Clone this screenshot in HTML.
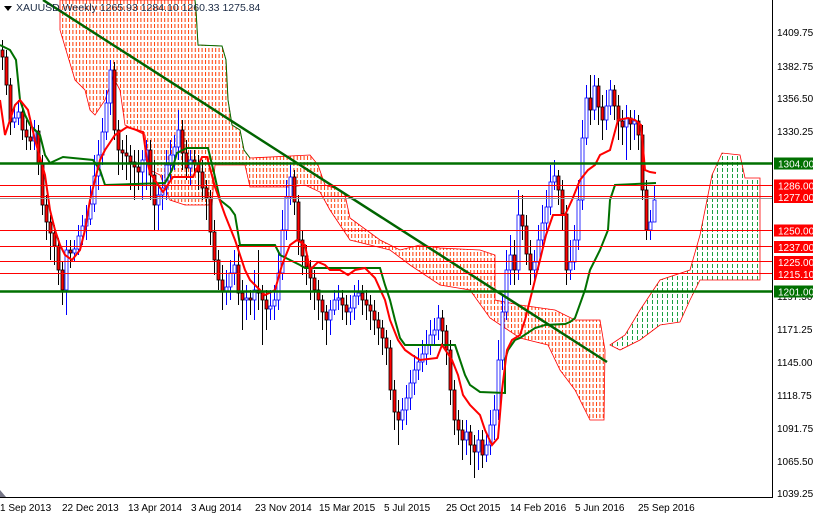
<!DOCTYPE html>
<html><head><meta charset="utf-8"><style>
html,body{margin:0;padding:0;background:#fff;width:814px;height:514px;overflow:hidden}
svg{display:block}
text{font-family:"Liberation Sans",sans-serif;font-size:10px}
</style></head><body>
<svg width="814" height="514" xmlns="http://www.w3.org/2000/svg">
<defs>
<pattern id="po" width="3.4" height="6" patternUnits="userSpaceOnUse"><rect x="1" y="0" width="1" height="4" fill="#ff3a00"/></pattern>
<pattern id="pg" width="5" height="6" patternUnits="userSpaceOnUse"><rect x="2" y="0" width="1" height="4" fill="#1aa040"/></pattern>
<clipPath id="cp"><rect x="0" y="0" width="772" height="497"/></clipPath>
</defs>
<rect width="814" height="514" fill="#fff"/>
<g clip-path="url(#cp)">
<polygon fill="url(#po)" stroke="#f00" stroke-width="0.8" points="60,0 195,0 196,10 198,45 222,46 226,60 228,100 232,125 240,130 244,150 250,158 310,155 318,165 325,185 340,190 345,195 350,218 380,240 400,250 420,245 440,248 480,250 495,255 495,300 520,305 555,310 575,320 600,320 605,350 604,420 590,420 575,390 560,370 548,345 520,338 505,328 490,318 470,290 440,285 410,265 390,250 370,245 350,240 330,210 320,192 305,185 290,187 250,187 245,165 215,165 212,205 185,205 170,200 160,175 150,170 145,135 135,130 125,125 120,90 113,77 105,100 95,115 90,110 85,90 75,80 63,40 60,30"/>
<polyline fill="none" stroke="#007000" stroke-width="1" points="195,0 196,10 198,45 222,46 226,60 228,100 232,125 240,130 244,150 250,158"/>
<polygon fill="url(#pg)" stroke="#f00" stroke-width="0.8" points="610,345 625,335 640,310 660,280 690,270 700,235 712,175 722,153 740,155 745,178 760,178 760,280 730,280 700,280 690,300 680,322 660,325 640,340 620,350"/>
<path fill="none" stroke="#000" stroke-width="1" d="M2.5 40V70M6.5 50V95M10.5 78V135M22.5 105V140M26.5 120V150M30.5 125V150M38.5 125V175M42.5 155V215M46.5 195V240M50.5 215V260M54.5 225V265M58.5 238V285M62.5 262V305M70.5 240V268M114.5 62V140M118.5 120V175M122.5 140V170M126.5 135V180M130.5 145V190M134.5 150V200M138.5 150V190M150.5 140V200M154.5 160V230M182.5 120V170M186.5 140V180M194.5 150V175M198.5 155V190M202.5 160V200M206.5 180V220M210.5 190V245M214.5 220V275M218.5 250V290M222.5 265V310M238.5 245V305M242.5 280V330M250.5 290V315M258.5 250V310M262.5 285V345M266.5 290V330M294.5 170V215M298.5 195V255M302.5 230V275M306.5 245V285M310.5 260V300M314.5 270V310M318.5 280V320M322.5 295V330M326.5 305V345M342.5 290V320M346.5 295V325M362.5 285V315M366.5 290V320M370.5 295V330M374.5 300V335M378.5 312V345M382.5 320V355M386.5 330V365M390.5 340V400M394.5 380V430M398.5 400V445M442.5 310V345M446.5 325V365M450.5 340V405M454.5 380V435M458.5 410V445M462.5 420V460M470.5 425V465M474.5 435V478M482.5 430V468M514.5 240V285M522.5 195V240M526.5 215V265M530.5 240V285M558.5 170V205M562.5 180V230M566.5 205V285M590.5 75V125M598.5 78V125M602.5 95V140M614.5 85V120M618.5 95V140M622.5 110V145M630.5 110V150M638.5 115V150M642.5 125V200M646.5 180V240"/>
<path fill="none" stroke="#0000ff" stroke-width="1" d="M14.5 105V128M18.5 100V125M34.5 120V150M66.5 240V315M74.5 240V262M78.5 225V255M82.5 215V245M86.5 205V240M90.5 185V225M94.5 155V212M98.5 140V190M102.5 118V165M106.5 90V140M110.5 60V115M142.5 150V200M146.5 140V190M158.5 185V230M162.5 175V210M166.5 150V200M170.5 140V180M174.5 135V170M178.5 110V160M190.5 150V185M226.5 270V305M230.5 260V300M234.5 250V285M246.5 285V320M254.5 270V320M270.5 290V320M274.5 285V320M278.5 250V310M282.5 210V280M286.5 180V240M290.5 165V205M330.5 300V335M334.5 290V315M338.5 285V310M350.5 295V325M354.5 285V320M358.5 280V305M402.5 398V430M406.5 385V425M410.5 370V410M414.5 355V395M418.5 348V380M422.5 340V372M426.5 330V365M430.5 320V355M434.5 318V345M438.5 305V340M466.5 420V455M478.5 430V470M486.5 435V462M490.5 410V455M494.5 395V440M498.5 340V420M502.5 295V370M506.5 250V320M510.5 235V285M518.5 190V280M534.5 250V280M538.5 225V270M542.5 205V250M546.5 190V230M550.5 165V215M554.5 160V190M570.5 240V280M574.5 225V270M578.5 180V250M582.5 120V210M586.5 85V145M594.5 75V120M606.5 90V130M610.5 80V115M626.5 105V160M634.5 110V140M650.5 210V240M654.5 185V220"/>
<g fill="#f00" stroke="#000" stroke-width="0.8">
<rect x="1" y="50" width="3" height="7"/><rect x="5" y="57" width="3" height="28"/><rect x="9" y="85" width="3" height="37"/><rect x="21" y="112" width="3" height="18"/><rect x="25" y="130" width="3" height="7"/><rect x="29" y="137" width="3" height="4"/><rect x="37" y="131" width="3" height="32"/><rect x="41" y="163" width="3" height="42"/><rect x="45" y="205" width="3" height="17"/><rect x="49" y="222" width="3" height="11"/><rect x="53" y="233" width="3" height="13"/><rect x="57" y="246" width="3" height="24"/><rect x="61" y="270" width="3" height="20"/><rect x="69" y="250" width="3" height="3"/><rect x="113" y="70" width="3" height="60"/><rect x="117" y="130" width="3" height="20"/><rect x="121" y="150" width="3" height="3"/><rect x="125" y="153" width="3" height="3"/><rect x="129" y="156" width="3" height="6"/><rect x="133" y="162" width="3" height="5"/><rect x="137" y="167" width="3" height="5"/><rect x="149" y="150" width="3" height="25"/><rect x="153" y="175" width="3" height="30"/><rect x="181" y="130" width="3" height="23"/><rect x="185" y="153" width="3" height="15"/><rect x="193" y="160" width="3" height="3"/><rect x="197" y="163" width="3" height="9"/><rect x="201" y="172" width="3" height="16"/><rect x="205" y="188" width="3" height="10"/><rect x="209" y="198" width="3" height="34"/><rect x="213" y="232" width="3" height="28"/><rect x="217" y="260" width="3" height="20"/><rect x="221" y="280" width="3" height="12"/><rect x="237" y="265" width="3" height="28"/><rect x="241" y="293" width="3" height="7"/><rect x="249" y="298" width="3" height="2"/><rect x="257" y="290" width="3" height="3"/><rect x="261" y="293" width="3" height="7"/><rect x="265" y="300" width="3" height="9"/><rect x="293" y="177" width="3" height="25"/><rect x="297" y="202" width="3" height="38"/><rect x="301" y="240" width="3" height="16"/><rect x="305" y="256" width="3" height="11"/><rect x="309" y="267" width="3" height="11"/><rect x="313" y="278" width="3" height="12"/><rect x="317" y="290" width="3" height="10"/><rect x="321" y="300" width="3" height="12"/><rect x="325" y="312" width="3" height="8"/><rect x="341" y="298" width="3" height="7"/><rect x="345" y="305" width="3" height="7"/><rect x="361" y="293" width="3" height="7"/><rect x="365" y="300" width="3" height="5"/><rect x="369" y="305" width="3" height="6"/><rect x="373" y="311" width="3" height="9"/><rect x="377" y="320" width="3" height="8"/><rect x="381" y="328" width="3" height="10"/><rect x="385" y="338" width="3" height="10"/><rect x="389" y="348" width="3" height="42"/><rect x="393" y="390" width="3" height="22"/><rect x="397" y="412" width="3" height="8"/><rect x="441" y="318" width="3" height="13"/><rect x="445" y="331" width="3" height="19"/><rect x="449" y="350" width="3" height="40"/><rect x="453" y="390" width="3" height="30"/><rect x="457" y="420" width="3" height="10"/><rect x="461" y="430" width="3" height="10"/><rect x="469" y="432" width="3" height="13"/><rect x="473" y="445" width="3" height="7"/><rect x="481" y="440" width="3" height="15"/><rect x="513" y="255" width="3" height="15"/><rect x="521" y="215" width="3" height="11"/><rect x="525" y="226" width="3" height="28"/><rect x="529" y="254" width="3" height="16"/><rect x="557" y="176" width="3" height="14"/><rect x="561" y="190" width="3" height="24"/><rect x="565" y="214" width="3" height="56"/><rect x="589" y="98" width="3" height="12"/><rect x="597" y="86" width="3" height="21"/><rect x="601" y="107" width="3" height="13"/><rect x="613" y="90" width="3" height="16"/><rect x="617" y="106" width="3" height="15"/><rect x="621" y="121" width="3" height="6"/><rect x="629" y="118" width="3" height="6"/><rect x="637" y="121" width="3" height="14"/><rect x="641" y="135" width="3" height="55"/><rect x="645" y="190" width="3" height="40"/>
</g>
<g fill="#fff" stroke="#0000ff" stroke-width="0.8">
<rect x="13" y="118" width="3" height="4"/><rect x="17" y="112" width="3" height="6"/><rect x="33" y="131" width="3" height="10"/><rect x="65" y="250" width="3" height="40"/><rect x="73" y="249" width="3" height="4"/><rect x="77" y="236" width="3" height="13"/><rect x="81" y="226" width="3" height="10"/><rect x="85" y="219" width="3" height="7"/><rect x="89" y="204" width="3" height="15"/><rect x="93" y="176" width="3" height="28"/><rect x="97" y="155" width="3" height="21"/><rect x="101" y="132" width="3" height="23"/><rect x="105" y="103" width="3" height="29"/><rect x="109" y="70" width="3" height="33"/><rect x="141" y="160" width="3" height="12"/><rect x="145" y="150" width="3" height="10"/><rect x="157" y="195" width="3" height="10"/><rect x="161" y="188" width="3" height="7"/><rect x="165" y="165" width="3" height="23"/><rect x="169" y="155" width="3" height="10"/><rect x="173" y="147" width="3" height="8"/><rect x="177" y="130" width="3" height="17"/><rect x="189" y="160" width="3" height="8"/><rect x="225" y="287" width="3" height="5"/><rect x="229" y="273" width="3" height="14"/><rect x="233" y="265" width="3" height="8"/><rect x="245" y="298" width="3" height="2"/><rect x="253" y="290" width="3" height="10"/><rect x="269" y="306" width="3" height="3"/><rect x="273" y="300" width="3" height="6"/><rect x="277" y="273" width="3" height="27"/><rect x="281" y="230" width="3" height="43"/><rect x="285" y="197" width="3" height="33"/><rect x="289" y="177" width="3" height="20"/><rect x="329" y="310" width="3" height="10"/><rect x="333" y="300" width="3" height="10"/><rect x="337" y="298" width="3" height="2"/><rect x="349" y="308" width="3" height="4"/><rect x="353" y="296" width="3" height="12"/><rect x="357" y="293" width="3" height="3"/><rect x="401" y="410" width="3" height="10"/><rect x="405" y="398" width="3" height="12"/><rect x="409" y="383" width="3" height="15"/><rect x="413" y="370" width="3" height="13"/><rect x="417" y="362" width="3" height="8"/><rect x="421" y="354" width="3" height="8"/><rect x="425" y="345" width="3" height="9"/><rect x="429" y="335" width="3" height="10"/><rect x="433" y="330" width="3" height="5"/><rect x="437" y="318" width="3" height="12"/><rect x="465" y="432" width="3" height="8"/><rect x="477" y="440" width="3" height="12"/><rect x="485" y="445" width="3" height="10"/><rect x="489" y="425" width="3" height="20"/><rect x="493" y="410" width="3" height="15"/><rect x="497" y="360" width="3" height="50"/><rect x="501" y="312" width="3" height="48"/><rect x="505" y="270" width="3" height="42"/><rect x="509" y="255" width="3" height="15"/><rect x="517" y="215" width="3" height="55"/><rect x="533" y="262" width="3" height="8"/><rect x="537" y="240" width="3" height="22"/><rect x="541" y="223" width="3" height="17"/><rect x="545" y="207" width="3" height="16"/><rect x="549" y="182" width="3" height="25"/><rect x="553" y="176" width="3" height="6"/><rect x="569" y="262" width="3" height="8"/><rect x="573" y="240" width="3" height="22"/><rect x="577" y="200" width="3" height="40"/><rect x="581" y="138" width="3" height="62"/><rect x="585" y="98" width="3" height="40"/><rect x="593" y="86" width="3" height="24"/><rect x="605" y="106" width="3" height="14"/><rect x="609" y="90" width="3" height="16"/><rect x="625" y="118" width="3" height="9"/><rect x="633" y="121" width="3" height="3"/><rect x="649" y="222" width="3" height="8"/><rect x="653" y="200" width="3" height="22"/>
</g>
<polyline fill="none" stroke="#007000" stroke-width="2" points="0,45 10,50 16,60 18,80 20,100 25,115 30,125 35,130 40,135 45,155 50,163 63,157 93,160 100,170 105,185 165,183 172,170 177,153 187,148 208,148 215,177 220,200 230,208 235,215 240,245 275,245 280,255 290,260 300,265 305,268 380,268 385,285 390,300 395,320 400,338 405,345 455,345 460,360 465,375 470,385 480,392 505,393 505,360 508,350 515,340 520,338 535,328 545,325 565,324 570,322 575,318 585,290 590,270 600,250 608,230 610,200 615,185 656,183"/>
<polyline fill="none" stroke="#f00" stroke-width="2" points="0,100 5,135 10,120 15,105 20,100 28,110 35,140 45,175 50,210 55,230 60,245 65,255 72,260 80,250 85,230 90,200 95,180 100,160 105,150 115,135 127,127 143,132 147,160 150,173 163,192 173,177 193,177 202,157 207,157 215,187 225,215 235,240 240,255 245,270 250,280 255,285 265,295 275,290 282,265 290,245 297,240 305,245 310,270 318,262 325,265 330,270 340,270 348,275 355,270 365,268 375,278 385,300 390,320 398,340 405,350 412,355 420,360 437,358 442,345 452,360 458,375 463,395 470,405 480,415 485,430 492,445 498,438 502,390 507,350 512,340 520,335 525,320 530,300 535,280 540,260 546,235 553,215 565,215 572,200 580,180 588,170 595,165 600,155 610,150 618,120 628,118 635,120 641,125 645,170 650,172 656,173"/>
<line x1="43" y1="0" x2="607" y2="362" stroke="#006400" stroke-width="2.5"/>
</g>
<g stroke-width="1">
<line x1="0" y1="185.5" x2="772" y2="185.5" stroke="#f00"/>
<line x1="0" y1="196.5" x2="772" y2="196.5" stroke="#f00"/>
<line x1="0" y1="198.5" x2="772" y2="198.5" stroke="#999"/>
<line x1="0" y1="230.5" x2="772" y2="230.5" stroke="#f00"/>
<line x1="0" y1="246.5" x2="772" y2="246.5" stroke="#f00"/>
<line x1="0" y1="261.5" x2="772" y2="261.5" stroke="#f00"/>
<line x1="0" y1="273.5" x2="772" y2="273.5" stroke="#f00"/>
</g>
<line x1="0" y1="163.5" x2="772" y2="163.5" stroke="#007000" stroke-width="2.5"/>
<line x1="0" y1="291.5" x2="772" y2="291.5" stroke="#007000" stroke-width="2.5"/>
<line x1="772.5" y1="0" x2="772.5" y2="497" stroke="#000"/>
<line x1="0" y1="497.5" x2="773" y2="497.5" stroke="#000"/>
<g fill="#000">
<text x="777" y="36">1409.75</text><text x="777" y="70">1382.75</text><text x="777" y="102">1356.50</text><text x="777" y="135">1330.25</text>
<text x="777" y="300">1197.50</text><text x="777" y="333">1171.25</text><text x="777" y="366">1145.00</text><text x="777" y="399">1118.75</text><text x="777" y="432">1091.75</text><text x="777" y="465">1065.50</text><text x="777" y="497">1039.25</text>
</g>
<g>
<rect x="774" y="157.5" width="39" height="12" fill="#007000"/><text x="778" y="167.5" fill="#fff">1304.00</text>
<rect x="774" y="179.5" width="39" height="12" fill="#f00"/><text x="778" y="189.5" fill="#fff">1286.00</text>
<rect x="774" y="191" width="39" height="12" fill="#f00"/><text x="778" y="201" fill="#fff">1277.00</text>
<rect x="774" y="224.5" width="39" height="12" fill="#f00"/><text x="778" y="234.5" fill="#fff">1250.00</text>
<rect x="774" y="241" width="39" height="12" fill="#f00"/><text x="778" y="251" fill="#fff">1237.00</text>
<rect x="774" y="256" width="39" height="12" fill="#f00"/><text x="778" y="266" fill="#fff">1225.00</text>
<rect x="774" y="268" width="39" height="12" fill="#f00"/><text x="778" y="278" fill="#fff">1215.10</text>
<rect x="774" y="285.5" width="39" height="12" fill="#007000"/><text x="778" y="295.5" fill="#fff">1201.00</text>
</g>
<g fill="#000">
<text x="0" y="511">1 Sep 2013</text><text x="62" y="511">22 Dec 2013</text><text x="128" y="511">13 Apr 2014</text><text x="191" y="511">3 Aug 2014</text><text x="255" y="511">23 Nov 2014</text><text x="319" y="511">15 Mar 2015</text><text x="384" y="511">5 Jul 2015</text><text x="446" y="511">25 Oct 2015</text><text x="510" y="511">14 Feb 2016</text><text x="575" y="511">5 Jun 2016</text><text x="638" y="511">25 Sep 2016</text>
</g>
<polygon points="0,490 6,497 0,497" fill="#778"/>
<polygon points="4,6 12,6 8,11" fill="#000"/>
<text x="16" y="11" fill="#1a2a44" style="font-size:10.5px">XAUUSD,Weekly  1265.93 1284.10 1260.33 1275.84</text>
</svg>
</body></html>
